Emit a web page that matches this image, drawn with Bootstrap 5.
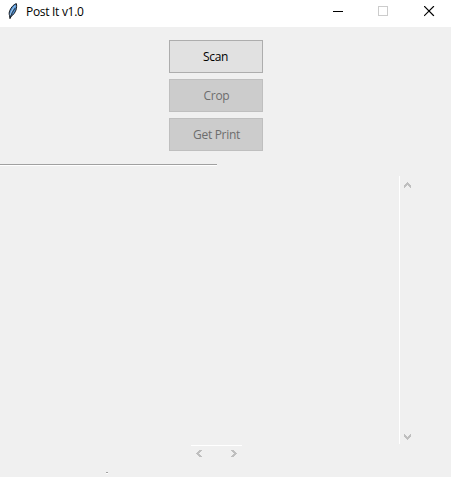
<!DOCTYPE html>
<html lang="en">
<head>
<meta charset="utf-8">
<title>Post It v1.0</title>
<link href="https://cdn.jsdelivr.net/npm/bootstrap@5.3.0/dist/css/bootstrap.min.css" rel="stylesheet">
<style>
body{width:451px;height:477px;background:#f0f0f0;font:12px/16px "Open Sans","Noto Sans",sans-serif;color:#000}
svg{display:block;flex:none}
.titlebar{height:27px;background:#fff}
.feather{margin:3px 0 0 7px}
.app-title{margin:4px 0 0 7px;letter-spacing:-.3px;white-space:nowrap}
.controls{margin:6px 16px 0 0}
.controls svg+svg{margin-left:35px}
.controls svg:last-child{margin-left:36px}
.actions{width:94px;margin:13px 0 0 169px;gap:6px}
.tk-btn{--bs-btn-border-radius:0;--bs-btn-bg:#e1e1e1;--bs-btn-border-color:#adadad;--bs-btn-color:#000;--bs-btn-disabled-bg:#ccc;--bs-btn-disabled-border-color:#bfbfbf;--bs-btn-disabled-color:#6d6d6d;--bs-btn-disabled-opacity:1;height:33px;padding:0 1px 0 0;font-size:12px;line-height:31px;letter-spacing:-.3px}
.tk-btn:disabled{padding:0 0 0 1px}
.rule{height:2px;border-top:1px solid #a0a0a0;border-bottom:1px solid #fff}
.rule-main{width:217px;margin-top:13px}
.rule-dot{width:2px;margin:14px 0 0 106px}
.vscroll{width:20px;height:268px;margin:10px 0 0 399px;border-left:1px solid #fff;padding:6px 0 4px 4px}
.hscroll{width:51px;height:13px;margin:1px 0 0 191px;border-top:1px solid #fff;padding:4px 5px 0 5px}
</style>
<script src="https://cdn.jsdelivr.net/npm/bootstrap@5.3.0/dist/js/bootstrap.bundle.min.js"></script>
</head>
<body class="m-0 overflow-hidden d-flex flex-column">
<header class="titlebar d-flex align-items-start flex-shrink-0">
  <svg class="feather" width="12" height="17" viewBox="0 0 12 17"><path d="M9.300.6C6.500 1.500 4 4.500 2.800 7.500c-.8 2-.8 3.500-.3 5L3 15.500l1.500-2.700C6.500 12 8 9.500 9 7c.7-2.300.9-4.500.3-6.400z" fill="#4f8fd0" stroke="#17191d" stroke-width="1"/><path d="M8.300 2.800C6 5 4 9 3.300 12" fill="none" stroke="#a9cdee" stroke-width="1"/><path d="M8.300 5C6 8 4.500 10.500 3 15.500" fill="none" stroke="#17191d" stroke-width=".8"/></svg>
  <span class="app-title">Post It v1.0</span>
  <div class="controls d-flex ms-auto">
    <svg width="10" height="11" shape-rendering="crispEdges"><path d="M0 5h10v1H0z"/></svg>
    <svg width="10" height="11" shape-rendering="crispEdges"><path d="M.5.500h9v9h-9z" fill="none" stroke="#ccc"/></svg>
    <svg width="11" height="11"><path d="M.5.500l9 9M9.500.500l-9 9" stroke="#000" stroke-width="1.150" stroke-linecap="square"/></svg>
  </div>
</header>
<main class="d-flex flex-column">
  <div class="actions d-flex flex-column">
    <button class="btn tk-btn w-100">Scan</button>
    <button class="btn tk-btn w-100" disabled>Crop</button>
    <button class="btn tk-btn w-100" disabled>Get Print</button>
  </div>
  <div class="rule rule-main"></div>
  <div class="vscroll d-flex flex-column justify-content-between">
    <svg width="7" height="6" fill="#bfbfbf" shape-rendering="crispEdges"><path d="M3 0h1v1h1v1h1v1h1v3H6V5H5V4H4V3H3v1H2v1H1v1H0V3h1V2h1V1h1z"/></svg>
    <svg width="7" height="6" fill="#bfbfbf" shape-rendering="crispEdges"><path d="M0 0h1v1h1v1h1v1h1V2h1V1h1V0h1v3H6v1H5v1H4v1H3V5H2V4H1V3H0z"/></svg>
  </div>
  <div class="hscroll d-flex justify-content-between">
    <svg width="6" height="7" fill="#bfbfbf" shape-rendering="crispEdges"><path d="M3 0h3v1H5v1H4v1H3v1h1v1h1v1h1v1H3V6H2V5H1V4H0V3h1V2h1V1h1z"/></svg>
    <svg width="6" height="7" fill="#bfbfbf" shape-rendering="crispEdges"><path d="M0 0h3v1h1v1h1v1h1v1H5v1H4v1H3v1H0V6h1V5h1V4h1V3H2V2H1V1H0z"/></svg>
  </div>
  <div class="rule rule-dot"></div>
</main>
</body>
</html>
